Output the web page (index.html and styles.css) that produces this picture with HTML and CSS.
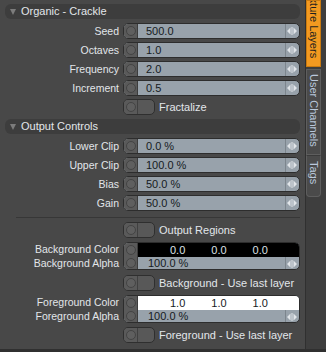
FILE: index.html
```html
<!DOCTYPE html>
<html>
<head>
<meta charset="utf-8">
<link rel="stylesheet" href="styles.css">
</head>
<body>
<div class="app">
  <div class="main">
    <div class="head"><span class="tri"></span>Organic - Crackle</div>
    <div class="group">
      <div class="row"><span class="lbl">Seed</span><div class="field"><span class="knob"><i></i></span><span class="val">500.0</span><span class="arr"><svg width="10" height="8" viewBox="0 0 10 8"><path d="M0 4L3.5 0.5V7.5Z M4.5 0H5.5V8H4.5Z M6.5 0.5L10 4L6.5 7.5Z"/></svg></span></div></div>
      <div class="row"><span class="lbl">Octaves</span><div class="field"><span class="knob"><i></i></span><span class="val">1.0</span><span class="arr"><svg width="10" height="8" viewBox="0 0 10 8"><path d="M0 4L3.5 0.5V7.5Z M4.5 0H5.5V8H4.5Z M6.5 0.5L10 4L6.5 7.5Z"/></svg></span></div></div>
      <div class="row"><span class="lbl">Frequency</span><div class="field"><span class="knob"><i></i></span><span class="val">2.0</span><span class="arr"><svg width="10" height="8" viewBox="0 0 10 8"><path d="M0 4L3.5 0.5V7.5Z M4.5 0H5.5V8H4.5Z M6.5 0.5L10 4L6.5 7.5Z"/></svg></span></div></div>
      <div class="row"><span class="lbl">Increment</span><div class="field"><span class="knob"><i></i></span><span class="val">0.5</span><span class="arr"><svg width="10" height="8" viewBox="0 0 10 8"><path d="M0 4L3.5 0.5V7.5Z M4.5 0H5.5V8H4.5Z M6.5 0.5L10 4L6.5 7.5Z"/></svg></span></div></div>
      <div class="row"><span class="lbl"></span><div class="tog-wrap"><span class="tog"><span class="knob"><i></i></span></span><span class="tog-text">Fractalize</span></div></div>
    </div>
    <div class="head head2"><span class="tri"></span>Output Controls</div>
    <div class="group">
      <div class="row"><span class="lbl">Lower Clip</span><div class="field"><span class="knob"><i></i></span><span class="val">0.0 %</span><span class="arr"><svg width="10" height="8" viewBox="0 0 10 8"><path d="M0 4L3.5 0.5V7.5Z M4.5 0H5.5V8H4.5Z M6.5 0.5L10 4L6.5 7.5Z"/></svg></span></div></div>
      <div class="row"><span class="lbl">Upper Clip</span><div class="field"><span class="knob"><i></i></span><span class="val">100.0 %</span><span class="arr"><svg width="10" height="8" viewBox="0 0 10 8"><path d="M0 4L3.5 0.5V7.5Z M4.5 0H5.5V8H4.5Z M6.5 0.5L10 4L6.5 7.5Z"/></svg></span></div></div>
      <div class="row"><span class="lbl">Bias</span><div class="field"><span class="knob"><i></i></span><span class="val">50.0 %</span><span class="arr"><svg width="10" height="8" viewBox="0 0 10 8"><path d="M0 4L3.5 0.5V7.5Z M4.5 0H5.5V8H4.5Z M6.5 0.5L10 4L6.5 7.5Z"/></svg></span></div></div>
      <div class="row"><span class="lbl">Gain</span><div class="field"><span class="knob"><i></i></span><span class="val">50.0 %</span><span class="arr"><svg width="10" height="8" viewBox="0 0 10 8"><path d="M0 4L3.5 0.5V7.5Z M4.5 0H5.5V8H4.5Z M6.5 0.5L10 4L6.5 7.5Z"/></svg></span></div></div>
    </div>
    <div class="sep"></div>
    <div class="row r-regions"><span class="lbl"></span><div class="tog-wrap"><span class="tog"><span class="knob"><i></i></span></span><span class="tog-text">Output Regions</span></div></div>
    <div class="row r-comp">
      <div class="lbl2"><span>Background Color</span><span>Background Alpha</span></div>
      <div class="field comp">
        <span class="knob2"><i></i><i></i></span>
        <div class="comp-body">
          <div class="color black"><span>0.0</span><span>0.0</span><span>0.0</span></div>
          <div class="alpha"><span class="val">100.0 %</span><span class="arr"><svg width="10" height="8" viewBox="0 0 10 8"><path d="M0 4L3.5 0.5V7.5Z M4.5 0H5.5V8H4.5Z M6.5 0.5L10 4L6.5 7.5Z"/></svg></span></div>
        </div>
      </div>
    </div>
    <div class="row r-bglast"><span class="lbl"></span><div class="tog-wrap"><span class="tog"><span class="knob"><i></i></span></span><span class="tog-text">Background - Use last layer</span></div></div>
    <div class="row r-comp2">
      <div class="lbl2"><span>Foreground Color</span><span>Foreground Alpha</span></div>
      <div class="field comp">
        <span class="knob2"><i></i><i></i></span>
        <div class="comp-body">
          <div class="color white"><span>1.0</span><span>1.0</span><span>1.0</span></div>
          <div class="alpha"><span class="val">100.0 %</span><span class="arr"><svg width="10" height="8" viewBox="0 0 10 8"><path d="M0 4L3.5 0.5V7.5Z M4.5 0H5.5V8H4.5Z M6.5 0.5L10 4L6.5 7.5Z"/></svg></span></div>
        </div>
      </div>
    </div>
    <div class="row r-fglast"><span class="lbl"></span><div class="tog-wrap"><span class="tog"><span class="knob"><i></i></span></span><span class="tog-text">Foreground - Use last layer</span></div></div>
  </div>
  <div class="tabs">
    <div class="tab active"><span>Texture Layers</span></div>
    <div class="tab t-user"><span>User Channels</span></div>
    <div class="tab t-tags"><span>Tags</span></div>
  </div>
</div>
</body>
</html>
```

FILE: styles.css
```css
* { box-sizing: border-box; }
html, body { margin: 0; padding: 0; }
body {
  width: 326px;
  height: 352px;
  overflow: hidden;
  background: #484848;
  font-family: "Liberation Sans", Arial, sans-serif;
  font-size: 10.5px;
  color: #e2e6ea;
}
.app {
  display: flex;
  height: 352px;
  border-bottom: 3px solid #303030;
}
.main {
  width: 305px;
  padding-top: 4px;
}
.head {
  margin-left: 5px;
  width: 295px;
  height: 15px;
  border-radius: 6px;
  background: #3d3d3d;
  display: flex;
  align-items: center;
  padding-left: 5px;
  line-height: 15px;
  font-size: 11px;
}
.head2 { margin-top: 4px; }
.tri {
  width: 0; height: 0;
  border-left: 3.5px solid transparent;
  border-right: 3.5px solid transparent;
  border-top: 6px solid #7c7c7c;
  margin-right: 5px;
}
.group {
  display: flex;
  flex-direction: column;
  gap: 3px;
  margin-top: 4px;
}
.row {
  display: grid;
  grid-template-columns: 119px 177px;
  column-gap: 4px;
  align-items: center;
}
.lbl {
  text-align: right;
  white-space: nowrap;
  line-height: 16px;
}
.field {
  height: 16px;
  border: 1px solid #2d2d2d;
  border-radius: 5px;
  overflow: hidden;
  display: flex;
  background: #98a2ab;
}
.knob {
  width: 14px;
  flex: none;
  background: #5a5a5a;
  border-right: 1px solid #3c3c3c;
  display: flex;
  align-items: center;
  justify-content: center;
}
.knob i, .knob2 i {
  display: block;
  width: 10px;
  height: 10px;
  border-radius: 50%;
  border: 1px solid #444;
  background: #5f5f5f;
}
.val {
  flex: 1;
  color: #161a1e;
  padding-left: 8px;
  line-height: 14px;
  font-size: 11px;
  white-space: nowrap;
}
.arr {
  width: 14px;
  flex: none;
  border-left: 1px solid #7c858d;
  display: flex;
  align-items: center;
  padding-left: 1px;
}
.arr svg { fill: #e1e5e9; display: block; }
.tog-wrap {
  display: flex;
  align-items: center;
  gap: 4px;
}
.tog {
  width: 32px;
  height: 16px;
  border: 1px solid #2f2f2f;
  border-radius: 5px;
  background: #585858;
  overflow: hidden;
  display: flex;
}
.tog .knob { background: #5a5a5a; border-right: 1px solid #404040; }
.tog-text { white-space: nowrap; line-height: 16px; font-size: 11px; }
.sep {
  margin: 6px 0 0 16px;
  width: 284px;
  height: 1px;
  background: #373737;
}
.r-regions { margin-top: 4px; }
.r-comp { margin-top: 4px; align-items: stretch; }
.r-bglast { margin-top: 5px; }
.r-comp2 { margin-top: 4px; align-items: stretch; }
.r-fglast { margin-top: 4px; }
.lbl2 {
  display: flex;
  flex-direction: column;
  align-items: flex-end;
  line-height: 14px;
  white-space: nowrap;
}
.comp { height: 28px; }
.knob2 {
  width: 14px;
  flex: none;
  background: #5a5a5a;
  border-right: 1px solid #3c3c3c;
  display: flex;
  flex-direction: column;
  align-items: center;
  justify-content: space-around;
}
.comp-body {
  flex: 1;
  display: flex;
  flex-direction: column;
}
.color {
  height: 14px;
  display: flex;
  padding-left: 32px;
  gap: 26px;
  line-height: 14px;
  font-size: 11px;
}
.color.black { background: #000; color: #dde2e6; }
.color.white { background: #fff; color: #161a1e; }
.alpha {
  flex: 1;
  display: flex;
}
.alpha .val { padding-left: 10px; line-height: 13px; }
.tabs {
  width: 21px;
  flex: none;
  background: #3e3e3e;
  border-left: 1px solid #303030;
  display: flex;
  flex-direction: column;
  padding-right: 5px;
}
.tab {
  writing-mode: vertical-rl;
  display: flex;
  align-items: center;
  border: 1px solid #5e5e5e;
  background: #4a4a4a;
  color: #b9c8dc;
  line-height: 14px;
  font-size: 11px;
  white-space: nowrap;
}
.tab.active {
  background: #f39a20;
  color: #1f1f1f;
  border-color: #c97a10;
  height: 67px;
  justify-content: flex-end;
  padding-bottom: 8px;
  overflow: hidden;
}
.t-user { height: 86px; margin-top: 2px; padding-top: 4px; }
.t-tags { height: 42px; padding-top: 5px; border-radius: 0 0 4px 4px; border-top-color: #3a3a3a; }
```
